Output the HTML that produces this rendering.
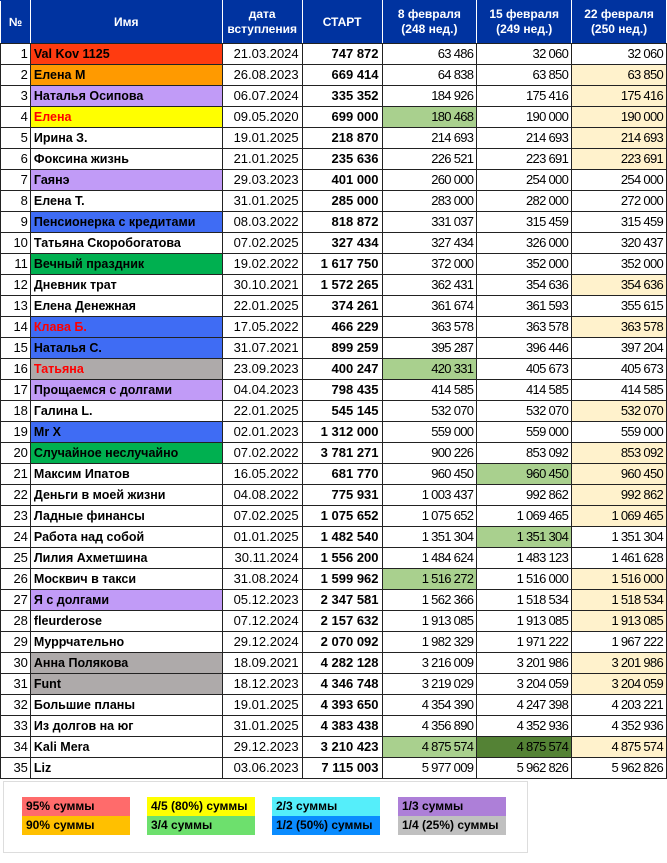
<!DOCTYPE html>
<html><head><meta charset="utf-8"><style>
body{margin:0;background:#fff;width:667px;height:863px;overflow:hidden;font-family:"Liberation Sans",sans-serif;}
table{border-collapse:collapse;table-layout:fixed;position:absolute;left:0;top:0;}
td,th{border:1px solid #222;padding:0 3px;height:20px;font-size:13px;white-space:nowrap;overflow:hidden;line-height:20px;}
th{background:#0033a0;color:#fff;font-size:12px;font-weight:bold;height:42px;line-height:15px;text-align:center;border-color:#0033a0 #fff #222 #fff;}
td:nth-child(1){text-align:right;padding-right:2px;}
td:nth-child(2){font-weight:bold;font-size:12.5px;text-align:left;}
td:nth-child(3){text-align:right;}
td:nth-child(4){text-align:right;font-weight:bold;}
td:nth-child(n+5){text-align:right;letter-spacing:-0.7px;font-size:13px;}
.r{background:#ff3b10}.o{background:#ff9a00}.l{background:#c19bf7}.y{background:#ffff00;color:#f00!important}.b{background:#3f6cf4}.g{background:#00b050}.gr{background:#aeaaaa}.rt{color:#f00}
.lg{background:#a9d08e}.dg{background:#548235}.p{background:#fff2cc}
.leg{position:absolute;left:3px;top:781px;width:523px;height:70px;border:1px solid #ddd;background:#fff;}
.c{position:absolute;width:108px;height:19px;font-size:12px;font-weight:bold;line-height:19px;padding-left:4px;box-sizing:border-box;}
</style></head><body>
<table>
<colgroup><col style="width:30px"><col style="width:192px"><col style="width:80px"><col style="width:80px"><col style="width:95px"><col style="width:95px"><col style="width:95px"></colgroup>
<tr><th>№</th><th>Имя</th><th>дата<br>вступления</th><th>СТАРТ</th><th>8 февраля<br>(248 нед.)</th><th>15 февраля<br>(249 нед.)</th><th>22 февраля<br>(250 нед.)</th></tr>
<tr><td>1</td><td class="r">Val Kov 1125</td><td>21.03.2024</td><td>747 872</td><td>63 486</td><td>32 060</td><td>32 060</td></tr>
<tr><td>2</td><td class="o">Елена М</td><td>26.08.2023</td><td>669 414</td><td>64 838</td><td>63 850</td><td class="p">63 850</td></tr>
<tr><td>3</td><td class="l">Наталья Осипова</td><td>06.07.2024</td><td>335 352</td><td>184 926</td><td>175 416</td><td class="p">175 416</td></tr>
<tr><td>4</td><td class="y">Елена</td><td>09.05.2020</td><td>699 000</td><td class="lg">180 468</td><td>190 000</td><td class="p">190 000</td></tr>
<tr><td>5</td><td>Ирина З.</td><td>19.01.2025</td><td>218 870</td><td>214 693</td><td>214 693</td><td class="p">214 693</td></tr>
<tr><td>6</td><td>Фоксина жизнь</td><td>21.01.2025</td><td>235 636</td><td>226 521</td><td>223 691</td><td class="p">223 691</td></tr>
<tr><td>7</td><td class="l">Гаянэ</td><td>29.03.2023</td><td>401 000</td><td>260 000</td><td>254 000</td><td>254 000</td></tr>
<tr><td>8</td><td>Елена Т.</td><td>31.01.2025</td><td>285 000</td><td>283 000</td><td>282 000</td><td>272 000</td></tr>
<tr><td>9</td><td class="b">Пенсионерка с кредитами</td><td>08.03.2022</td><td>818 872</td><td>331 037</td><td>315 459</td><td>315 459</td></tr>
<tr><td>10</td><td>Татьяна Скоробогатова</td><td>07.02.2025</td><td>327 434</td><td>327 434</td><td>326 000</td><td>320 437</td></tr>
<tr><td>11</td><td class="g">Вечный праздник</td><td>19.02.2022</td><td>1 617 750</td><td>372 000</td><td>352 000</td><td>352 000</td></tr>
<tr><td>12</td><td>Дневник трат</td><td>30.10.2021</td><td>1 572 265</td><td>362 431</td><td>354 636</td><td class="p">354 636</td></tr>
<tr><td>13</td><td>Елена Денежная</td><td>22.01.2025</td><td>374 261</td><td>361 674</td><td>361 593</td><td>355 615</td></tr>
<tr><td>14</td><td class="b rt">Клава Б.</td><td>17.05.2022</td><td>466 229</td><td>363 578</td><td>363 578</td><td class="p">363 578</td></tr>
<tr><td>15</td><td class="b">Наталья С.</td><td>31.07.2021</td><td>899 259</td><td>395 287</td><td>396 446</td><td>397 204</td></tr>
<tr><td>16</td><td class="gr rt">Татьяна</td><td>23.09.2023</td><td>400 247</td><td class="lg">420 331</td><td>405 673</td><td>405 673</td></tr>
<tr><td>17</td><td class="l">Прощаемся с долгами</td><td>04.04.2023</td><td>798 435</td><td>414 585</td><td>414 585</td><td>414 585</td></tr>
<tr><td>18</td><td>Галина L.</td><td>22.01.2025</td><td>545 145</td><td>532 070</td><td>532 070</td><td class="p">532 070</td></tr>
<tr><td>19</td><td class="b">Mr X</td><td>02.01.2023</td><td>1 312 000</td><td>559 000</td><td>559 000</td><td>559 000</td></tr>
<tr><td>20</td><td class="g">Случайное неслучайно</td><td>07.02.2022</td><td>3 781 271</td><td>900 226</td><td>853 092</td><td class="p">853 092</td></tr>
<tr><td>21</td><td>Максим Ипатов</td><td>16.05.2022</td><td>681 770</td><td>960 450</td><td class="lg">960 450</td><td class="p">960 450</td></tr>
<tr><td>22</td><td>Деньги в моей жизни</td><td>04.08.2022</td><td>775 931</td><td>1 003 437</td><td>992 862</td><td class="p">992 862</td></tr>
<tr><td>23</td><td>Ладные финансы</td><td>07.02.2025</td><td>1 075 652</td><td>1 075 652</td><td>1 069 465</td><td class="p">1 069 465</td></tr>
<tr><td>24</td><td>Работа над собой</td><td>01.01.2025</td><td>1 482 540</td><td>1 351 304</td><td class="lg">1 351 304</td><td>1 351 304</td></tr>
<tr><td>25</td><td>Лилия Ахметшина</td><td>30.11.2024</td><td>1 556 200</td><td>1 484 624</td><td>1 483 123</td><td>1 461 628</td></tr>
<tr><td>26</td><td>Москвич в такси</td><td>31.08.2024</td><td>1 599 962</td><td class="lg">1 516 272</td><td>1 516 000</td><td class="p">1 516 000</td></tr>
<tr><td>27</td><td class="l">Я с долгами</td><td>05.12.2023</td><td>2 347 581</td><td>1 562 366</td><td>1 518 534</td><td class="p">1 518 534</td></tr>
<tr><td>28</td><td>fleurderose</td><td>07.12.2024</td><td>2 157 632</td><td>1 913 085</td><td>1 913 085</td><td class="p">1 913 085</td></tr>
<tr><td>29</td><td>Муррчательно</td><td>29.12.2024</td><td>2 070 092</td><td>1 982 329</td><td>1 971 222</td><td>1 967 222</td></tr>
<tr><td>30</td><td class="gr">Анна Полякова</td><td>18.09.2021</td><td>4 282 128</td><td>3 216 009</td><td>3 201 986</td><td class="p">3 201 986</td></tr>
<tr><td>31</td><td class="gr">Funt</td><td>18.12.2023</td><td>4 346 748</td><td>3 219 029</td><td>3 204 059</td><td class="p">3 204 059</td></tr>
<tr><td>32</td><td>Большие планы</td><td>19.01.2025</td><td>4 393 650</td><td>4 354 390</td><td>4 247 398</td><td>4 203 221</td></tr>
<tr><td>33</td><td>Из долгов на юг</td><td>31.01.2025</td><td>4 383 438</td><td>4 356 890</td><td>4 352 936</td><td>4 352 936</td></tr>
<tr><td>34</td><td>Kali Mera</td><td>29.12.2023</td><td>3 210 423</td><td class="lg">4 875 574</td><td class="dg">4 875 574</td><td class="p">4 875 574</td></tr>
<tr><td>35</td><td>Liz</td><td>03.06.2023</td><td>7 115 003</td><td>5 977 009</td><td>5 962 826</td><td>5 962 826</td></tr>
</table>
<div class="leg">
<div class="c" style="left:18px;top:15px;background:#ff6b6b">95% суммы</div>
<div class="c" style="left:18px;top:34px;background:#ffc000">90% суммы</div>
<div class="c" style="left:143px;top:15px;background:#ffff00">4/5 (80%) суммы</div>
<div class="c" style="left:143px;top:34px;background:#6de06d">3/4 суммы</div>
<div class="c" style="left:268px;top:15px;background:#55eefa">2/3 суммы</div>
<div class="c" style="left:268px;top:34px;background:#0a8cff">1/2 (50%) суммы</div>
<div class="c" style="left:394px;top:15px;background:#ad7fd8">1/3 суммы</div>
<div class="c" style="left:394px;top:34px;background:#c0c0c0">1/4 (25%) суммы</div>
</div>
</body></html>
